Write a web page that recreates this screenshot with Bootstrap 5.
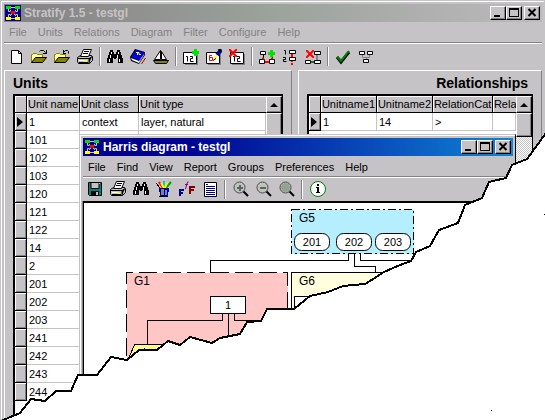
<!DOCTYPE html>
<html lang="en">
<head>
<meta charset="utf-8">
<meta name="viewport" content="width=device-width, initial-scale=1">
<title>Stratify 1.5 - testgl</title>
<link href="https://cdn.jsdelivr.net/npm/bootstrap@5.3.0/dist/css/bootstrap.min.css" rel="stylesheet">
<style>
:root { --face:#c6c3c6; --shade:#848284; }
body { font-family:"Liberation Sans",Arial,sans-serif; font-size:11px; line-height:14px; color:#000; background:var(--face); }
.desk { overflow:hidden; background:var(--face); height:100vh; }
.frame { background:var(--face); border:1px solid var(--face); box-shadow:inset 1px 1px #fff; padding:3px 2px 0 3px; }
.main-win { height:100vh; }
.caption { height:18px; font-size:12px; font-weight:700; color:#fff; padding:0 2px 0 1px; background:linear-gradient(90deg,#00008c,#000494 25%,#1084d6); }
.caption.idle { color:var(--face); background:linear-gradient(90deg,#848284,#9ca29c 50%,#bdbabd); }
.caption .logo { margin-right:3px; }
.cap-btn { width:16px; height:14px; padding:0; border:1px solid; border-color:#fff #000 #000 #fff; box-shadow:inset -1px -1px var(--shade); background:var(--face); color:#000; display:flex; }
.cap-btn svg { display:block; width:14px; height:12px; }
.cap-btn.last { margin-left:2px; }
.menu-bar { gap:11px; padding:3px 5px 0; height:20px; }
.menu-bar a { color:#000; text-decoration:none; }
.idle-menu a { color:#848284; }
.tools { height:28px; border-top:1px solid var(--shade); box-shadow:inset 0 1px #fff; }
.tools button { width:23px; height:22px; border:0; padding:0; background:none; display:flex; align-items:center; justify-content:center; }
.tools svg, .logo { width:16px; height:16px; display:block; overflow:visible; }
.sep { width:7px; height:19px; display:flex; justify-content:center; }
.sep::before { content:""; width:2px; border-left:1px solid var(--shade); border-right:1px solid #fff; }
.panels { gap:6px; }
.pane { border:1px solid; border-color:#fff var(--shade) var(--face) #fff; padding:3px 8px 0; min-width:0; }
.pane-l { flex:290 1 0; }
.pane-r { flex:243 1 0; }
.pane h2 { font-size:14px; line-height:19px; font-weight:700; margin:0 0 1px; }
.pane-r h2 { padding-right:5px; }
.gridbox { border:1px solid #000; border-top:2px solid #000; border-left-width:2px; background:#fff; }
.grid-t { table-layout:fixed; width:100%; border-collapse:separate; border-spacing:0; flex:1 1 0; min-width:0; }
.grid-t th { height:17px; font-weight:400; background:var(--face); border-right:1px solid #000; border-bottom:1px solid #000; box-shadow:inset 1px 1px #fff; padding:0 0 0 1px; white-space:nowrap; overflow:hidden; }
.grid-t th:last-child { border-right:0; }
.grid-t td { height:18px; border-right:1px solid var(--face); border-bottom:1px solid var(--face); padding:0 0 0 2px; white-space:nowrap; overflow:hidden; }
.grid-t td:first-child { background:var(--face); border-color:#000; box-shadow:inset 1px 1px #fff, inset -1px -1px var(--shade); }
.grid-t svg { display:block; width:6px; height:10px; }
.scroller { width:16px; background:repeating-conic-gradient(#fff 0 25%,#c6c3c6 0 50%) 0 0/2px 2px; }
.scroller button { width:16px; height:17px; border:1px solid; border-color:#fff #000 #000 #fff; box-shadow:inset -1px -1px var(--shade); background:var(--face); padding:0; display:flex; align-items:center; justify-content:center; }
.scroller svg { width:8px; height:4px; }
.thumb { border:1px solid; border-color:#fff #000 #000 #fff; box-shadow:inset -1px -1px var(--shade); background:var(--face); height:24px; }
.thumb.long { height:100%; }
.child-win { left:79px; right:29px; top:134px; bottom:0; border-right-color:#000; }
.child-win .menu-bar { height:21px; padding-top:4px; }
.child-win .tools { height:25px; }
.child-win .sep { width:8px; }
.sheet { background:#fff; border:1px solid #000; border-top:2px solid #000; box-shadow:-1px 0 var(--shade); overflow:hidden; }
.sheet svg { display:block; width:430px; height:220px; font-size:12px; }
.tear { pointer-events:none; left:0; top:0; width:100%; height:100%; }
</style>
<script src="https://cdn.jsdelivr.net/npm/bootstrap@5.3.0/dist/js/bootstrap.bundle.min.js"></script>
</head>
<body>
<svg width="0" height="0" class="position-absolute" aria-hidden="true" shape-rendering="crispEdges">
  <defs>
    <symbol id="logo" viewBox="0 0 16 16"><path fill="#00008c" d="M0 0h16v16H0z"/><path stroke="#c6c3c6" fill="none" d="M3.500 4v2.500h2M12.500 4v2.500h-2M3.500 12v-2.500h2M12.500 12v-2.500h-2M6 2.500h4M6 13.500h4M5 5l6 6M11 5l-6 6"/><path fill="#00e300" d="M1 1h5v3H1zM10 1h5v3h-5z"/><path fill="#f00" d="M6 6h4v3H6z"/><path fill="#ff0" d="M1 12h5v3H1zM10 12h5v3h-5z"/></symbol>
    <symbol id="new" viewBox="0 0 16 16"><path fill="#fff" stroke="#000" d="M3.500 1.500h7l3 3v10h-10z"/><path fill="none" stroke="#000" d="M10.500 1.500v3h3"/></symbol>
    <symbol id="folder" viewBox="0 0 16 16"><path fill="#ffff9c" stroke="#848200" d="M.5 13.500v-8h1l1-1h3l1 1h5v3"/><path fill="#848200" stroke="#000" d="M.5 13.500l4-5h11l-4 5z"/></symbol>
    <symbol id="open" viewBox="0 0 16 16"><use href="#folder"/><path fill="none" stroke="#000" d="M8.500 2.500l1-1h3l2 2M15.500 1v4M12 4.500h4"/></symbol>
    <symbol id="reopen" viewBox="0 0 16 16"><use href="#folder"/><path fill="none" stroke="#000" d="M14.500 4.500v-2l-1-1h-2l-2 2M9.500 1v3.500M9 4.500h3"/></symbol>
    <symbol id="print" viewBox="0 0 16 16"><path fill="#c6c3c6" stroke="#000" d="M.5 8.500l3-2h11l1 1v4l-3 3h-11l-1-2z"/><path fill="#fff" stroke="#000" d="M3.500 7.500l3-7h8l-3 7z"/><path stroke="#000" d="M7 2.500h5M6 4.500h5M1 9.500h11M12 14.500V9.500l3-2"/><path stroke="#fff" d="M2 11.500h7"/><path stroke="#ff0" stroke-width="2" d="M7 12h3"/><path stroke="#000" d="M2 13.500h9"/></symbol>
    <symbol id="binoc" viewBox="0 0 16 16"><path d="M3 1h3v2h1v2h2V3h1V1h3v2h1v3h1v3h1v5h-5V9H9v1H7V9H6v5H0V9h1V6h1V3h1z"/><path fill="#fff" d="M4 3h1v2H4zM11 3h1v2h-1zM3 6h1v3H3zM10 6h1v3h-1zM2 10h1v3H2zM12 10h1v3h-1z"/></symbol>
    <symbol id="book" viewBox="0 0 16 16"><path fill="#000" d="M0 8L5 0l10 3v3L9 15 1 12z"/><path fill="#fff" d="M1 9l8 3 5-7v1L9 14l-7-3z"/><path fill="#00f" d="M1 8l5-7 9 3-6 7z"/><path stroke="#ff0" fill="none" d="M6 3.500h3v2h2M7.500 6V4"/><path stroke="#848284" d="M9 12.500l5-7"/><path stroke="#a00" d="M11.500 15l4-6"/></symbol>
    <symbol id="boat" viewBox="0 0 16 16"><path fill="#fff" stroke="#000" d="M7.500 10.500v-9l-6 9zM8.500 10.500v-8l5 8z"/><path fill="#848200" stroke="#000" d="M.5 11.500h15l-2 3h-11z"/></symbol>
    <symbol id="card" viewBox="0 0 16 16"><path fill="#848284" d="M2 5h13v11H2z"/><path fill="#fff" stroke="#000" d="M.5 3.500h13v11H.5z"/></symbol>
    <symbol id="twelve" viewBox="0 0 16 16"><use href="#card"/><path fill="none" stroke="#000" d="M3 7.500h1.500v5M7 7.500h2.500v2h-2v3h3"/></symbol>
    <symbol id="plus" viewBox="0 0 7 7"><path fill="#00e300" d="M2 0h3v2h2v3H5v2H2V5H0V2h2z"/></symbol>
    <symbol id="cross" viewBox="0 0 8 8"><path stroke="#f00" stroke-width="2" d="M0 0l8 8M8 0L0 8"/></symbol>
    <symbol id="cardadd" viewBox="0 0 16 16"><use href="#twelve"/><use href="#plus" x="9" y="0" width="7" height="7"/></symbol>
    <symbol id="cardpen" viewBox="0 0 16 16"><use href="#card"/><path fill="none" stroke="#f00" d="M6 6.500H3.500v5h3v-3h-3"/><path stroke="#00008c" stroke-width="4" d="M11 6l4-5"/><path stroke="#ffff00" stroke-width="2" d="M8 10l3-4"/><path stroke="#000" d="M7 11.500l3-2M12 1l3-1v3"/></symbol>
    <symbol id="carddel" viewBox="0 0 16 16"><g transform="translate(1 0)"><use href="#twelve" width="16" height="16"/></g><use href="#cross" x="0" y="0" width="8" height="8"/></symbol>
    <symbol id="reladd" viewBox="0 0 16 16"><path stroke="#000" fill="none" d="M4.500 6v4M13.500 6v4"/><path fill="#fff" stroke="#000" d="M1.500 2.500h5v3h-5zM.5 10.500h5v4h-5zM10.500 10.500h5v4h-5z"/><path stroke="#f00" stroke-width="2" d="M6 13h4M4 8.500v2M13 8.500v2"/><use href="#plus" x="9" y="1" width="7" height="7"/></symbol>
    <symbol id="relnum" viewBox="0 0 16 16"><path stroke="#000" fill="none" d="M2 1.500h1.500v4M1 8.500h2.500v2h-2v2h3"/><path fill="#fff" stroke="#000" d="M7.500 1.500h6v3h-6zM7.500 8.500h6v3h-6z"/><path stroke="#f00" stroke-width="2" d="M10 5v3M10 12v1M10 14v2"/></symbol>
    <symbol id="reldel" viewBox="0 0 16 16"><path stroke="#848284" stroke-width="2" d="M12 6v5"/><path fill="#fff" stroke="#000" d="M9.500 2.500h6v3h-6zM.5 11.500h5v3h-5zM9.500 11.500h6v3h-6z"/><path stroke="#008200" stroke-width="2" d="M6 13h3"/><use href="#cross" x="1" y="1" width="8" height="8"/></symbol>
    <symbol id="check" viewBox="0 0 16 16"><path fill="none" stroke="#000" stroke-width="3" d="M2 8l4 5 8-10"/><path fill="none" stroke="#008200" stroke-width="2" d="M2 8l4 4 8-10"/></symbol>
    <symbol id="tree" viewBox="0 0 16 16"><path fill="none" stroke="#848284" d="M4.500 6v2.500h7V6M8.500 8v3"/><path fill="#fff" stroke="#000" d="M1.500 2.500h5v3h-5zM9.500 2.500h5v3h-5zM5.500 10.500h5v3h-5z"/></symbol>
    <symbol id="save" viewBox="0 0 16 16"><path fill="#008284" stroke="#000" d="M1.500 1.500h13v13h-12l-1-1z"/><path fill="#c6c3c6" stroke="#000" d="M4 1.500h8v6H4z"/><path fill="#000" d="M4 10h8v4H4z"/><path fill="#c6c3c6" d="M9 11h2v3H9zM12 2h1v1h-1z"/></symbol>
    <symbol id="pens" viewBox="0 0 16 16"><path stroke="#f00" stroke-width="2" d="M3 1l4 6"/><path stroke="#0cc" stroke-width="2" d="M8 0v7"/><path stroke="#00a200" stroke-width="2" d="M15 1L9 8"/><path stroke="#ff0" stroke-width="2" d="M5 2l3 5M11 2L9 7"/><path stroke="#000" d="M1 4l3 3M0 2l3 3"/><path fill="#00008c" d="M3 7h10v4h-1v4H4v-4H3z"/><path fill="#848284" d="M5 8h3v6H5z"/><path fill="#5a82ff" d="M9 9h2v5H9z"/><path stroke="#000" d="M3 15.500h9"/></symbol>
    <symbol id="fonts" viewBox="0 0 16 16"><path fill="none" stroke="#00008c" stroke-width="2" d="M1 15V9M0 9h5M1 12h3"/><path fill="none" stroke="#840084" d="M9.500 1H8.500L6.500 8M6 3.500h3"/><path fill="none" stroke="#840000" stroke-width="2" d="M11 13V6M10 6h6M11 9h4"/></symbol>
    <symbol id="report" viewBox="0 0 16 16"><path fill="#fff" stroke="#000" d="M2.500 1.500h12v14h-12z"/><path stroke="#00008c" d="M4 3.500h2M4 5.500h9M4 7.500h9M4 9.500h9M4 11.500h9M4 13.500h9"/></symbol>
    <symbol id="lens" viewBox="0 0 16 16"><path stroke="#000" stroke-width="2" d="M10 10l5 5"/><circle cx="6.500" cy="6.500" r="5.500" fill="#bdc3bd" stroke="#4a4a4a" shape-rendering="auto"/></symbol>
    <symbol id="zin" viewBox="0 0 16 16"><use href="#lens"/><path stroke="#636163" stroke-width="2" d="M4 7h6M7 4v6"/></symbol>
    <symbol id="zout" viewBox="0 0 16 16"><use href="#lens"/><path stroke="#636163" stroke-width="2" d="M4 7h6"/></symbol>
    <symbol id="zfit" viewBox="0 0 16 16"><use href="#lens"/><circle cx="6.500" cy="6.500" r="4.500" fill="#94a294"/></symbol>
    <symbol id="info" viewBox="0 0 16 16"><circle cx="8" cy="8" r="7.500" fill="#fff" stroke="#008200" shape-rendering="auto"/><path d="M7 3h2v2H7zM6 6h3v5h1v1H6v-1h1V7H6z"/></symbol>
    <symbol id="min" viewBox="0 0 14 12"><path d="M3 8h6v2H3z"/></symbol>
    <symbol id="max" viewBox="0 0 14 12"><path d="M2 1h10v9H2zM3 3v6h8V3z" fill-rule="evenodd"/></symbol>
    <symbol id="close" viewBox="0 0 14 12"><path stroke="#000" stroke-width="2" d="M3.500 2l7 7M10.500 2l-7 7"/></symbol>
  </defs>
</svg>

<div class="desk position-relative">
  <main class="main-win frame d-flex flex-column">
    <header class="caption idle d-flex align-items-center">
      <svg class="logo"><use href="#logo"/></svg><span class="me-auto">Stratify 1.5 - testgl</span>
      <button class="cap-btn" aria-label="Minimize"><svg><use href="#min"/></svg></button>
      <button class="cap-btn" aria-label="Maximize"><svg><use href="#max"/></svg></button>
      <button class="cap-btn last" aria-label="Close"><svg><use href="#close"/></svg></button>
    </header>
    <nav class="menu-bar idle-menu d-flex" aria-label="Main menu">
      <a href="#">File</a><a href="#">Units</a><a href="#">Relations</a><a href="#">Diagram</a><a href="#">Filter</a><a href="#">Configure</a><a href="#">Help</a>
    </nav>
    <div class="tools d-flex align-items-center flex-shrink-0" role="toolbar" aria-label="Main tools">
      <button aria-label="New"><svg><use href="#new"/></svg></button>
      <button aria-label="Open"><svg><use href="#open"/></svg></button>
      <button aria-label="Reopen"><svg><use href="#reopen"/></svg></button>
      <button aria-label="Print"><svg><use href="#print"/></svg></button>
      <span class="sep"></span>
      <button aria-label="Find"><svg><use href="#binoc"/></svg></button>
      <button aria-label="Book"><svg><use href="#book"/></svg></button>
      <button aria-label="Boat"><svg><use href="#boat"/></svg></button>
      <span class="sep"></span>
      <button aria-label="Add unit"><svg><use href="#cardadd"/></svg></button>
      <button aria-label="Edit unit"><svg><use href="#cardpen"/></svg></button>
      <button aria-label="Delete unit"><svg><use href="#carddel"/></svg></button>
      <span class="sep"></span>
      <button aria-label="Add relation"><svg><use href="#reladd"/></svg></button>
      <button aria-label="Number relations"><svg><use href="#relnum"/></svg></button>
      <button aria-label="Delete relation"><svg><use href="#reldel"/></svg></button>
      <span class="sep"></span>
      <button aria-label="Check"><svg><use href="#check"/></svg></button>
      <button aria-label="Diagram"><svg><use href="#tree"/></svg></button>
    </div>
    <div class="panels d-flex flex-grow-1">
      <section class="pane pane-l d-flex flex-column">
        <h2>Units</h2>
        <div class="gridbox d-flex flex-grow-1 align-items-start">
          <table class="grid-t">
            <colgroup><col style="width:12px"><col style="width:53px"><col style="width:59px"><col></colgroup>
            <thead><tr><th></th><th>Unit name</th><th>Unit class</th><th>Unit type</th></tr></thead>
            <tbody>
              <tr><td><svg viewBox="0 0 6 10"><path d="M0 0l6 5-6 5z"/></svg></td><td>1</td><td>context</td><td>layer, natural</td></tr>
              <tr><td></td><td>101</td><td></td><td></td></tr>
              <tr><td></td><td>102</td><td></td><td></td></tr>
              <tr><td></td><td>103</td><td></td><td></td></tr>
              <tr><td></td><td>120</td><td></td><td></td></tr>
              <tr><td></td><td>121</td><td></td><td></td></tr>
              <tr><td></td><td>122</td><td></td><td></td></tr>
              <tr><td></td><td>14</td><td></td><td></td></tr>
              <tr><td></td><td>2</td><td></td><td></td></tr>
              <tr><td></td><td>201</td><td></td><td></td></tr>
              <tr><td></td><td>202</td><td></td><td></td></tr>
              <tr><td></td><td>203</td><td></td><td></td></tr>
              <tr><td></td><td>241</td><td></td><td></td></tr>
              <tr><td></td><td>242</td><td></td><td></td></tr>
              <tr><td></td><td>243</td><td></td><td></td></tr>
              <tr><td></td><td>244</td><td></td><td></td></tr>
            </tbody>
          </table>
          <div class="scroller align-self-stretch"><button aria-label="Scroll up"><svg viewBox="0 0 8 4"><path d="M4 0l4 4H0z"/></svg></button><div class="thumb long"></div></div>
        </div>
      </section>
      <section class="pane pane-r d-flex flex-column">
        <h2 class="text-end">Relationships</h2>
        <div class="gridbox d-flex flex-grow-1 align-items-start">
          <table class="grid-t">
            <colgroup><col style="width:12px"><col style="width:56px"><col style="width:56px"><col style="width:60px"><col></colgroup>
            <thead><tr><th></th><th>Unitname1</th><th>Unitname2</th><th>RelationCat</th><th>Rela</th></tr></thead>
            <tbody><tr><td><svg viewBox="0 0 6 10"><path d="M0 0l6 5-6 5z"/></svg></td><td>1</td><td>14</td><td>&gt;</td><td></td></tr></tbody>
          </table>
          <div class="scroller align-self-stretch"><button aria-label="Scroll up"><svg viewBox="0 0 8 4"><path d="M4 0l4 4H0z"/></svg></button><div class="thumb"></div></div>
        </div>
      </section>
    </div>
  </main>

  <section class="child-win frame position-absolute d-flex flex-column">
    <header class="caption d-flex align-items-center">
      <svg class="logo"><use href="#logo"/></svg><span class="me-auto">Harris diagram - testgl</span>
      <button class="cap-btn" aria-label="Minimize"><svg><use href="#min"/></svg></button>
      <button class="cap-btn" aria-label="Maximize"><svg><use href="#max"/></svg></button>
      <button class="cap-btn last" aria-label="Close"><svg><use href="#close"/></svg></button>
    </header>
    <nav class="menu-bar d-flex" aria-label="Diagram menu">
      <a href="#">File</a><a href="#">Find</a><a href="#">View</a><a href="#">Report</a><a href="#">Groups</a><a href="#">Preferences</a><a href="#">Help</a>
    </nav>
    <div class="tools d-flex align-items-center flex-shrink-0" role="toolbar" aria-label="Diagram tools">
      <button aria-label="Save"><svg><use href="#save"/></svg></button>
      <button aria-label="Print"><svg><use href="#print"/></svg></button>
      <button aria-label="Find"><svg><use href="#binoc"/></svg></button>
      <button aria-label="Colours"><svg><use href="#pens"/></svg></button>
      <button aria-label="Fonts"><svg><use href="#fonts"/></svg></button>
      <button aria-label="Report"><svg><use href="#report"/></svg></button>
      <span class="sep"></span>
      <button aria-label="Zoom in"><svg><use href="#zin"/></svg></button>
      <button aria-label="Zoom out"><svg><use href="#zout"/></svg></button>
      <button aria-label="Zoom to fit"><svg><use href="#zfit"/></svg></button>
      <span class="sep"></span>
      <button aria-label="Info"><svg><use href="#info"/></svg></button>
    </div>
    <div class="sheet flex-grow-1">
      <svg viewBox="84 203 430 220" role="img" aria-label="Harris diagram">
        <g stroke="#000" fill="none" shape-rendering="crispEdges">
          <path fill="#b5efff" stroke-dasharray="8 3 2 3" d="M291.500 209.500h122v44h-122z"/>
          <path fill="#ffc6c6" stroke-dasharray="18 6" d="M126.500 380V272.500h161V380"/>
          <path fill="#ffffde" d="M291.500 380V272.500H400V380"/>
          <path fill="#fff" d="M294.500 330v-33.500h60V330z"/>
          <path d="M348.500 253v7.500h-138v12M354.500 253v13.500h21v6M360.500 253v7.500h55"/>
          <path fill="#ffff84" d="M128.500 359l6-14.500h34v20z"/>
          <path d="M222.500 313v7.500h-75v24M228.500 313v30M234.500 313v7.500h30"/>
          <path d="M144.500 348v3M151.500 349v2M139.500 350h18"/>
          <path fill="#fff" d="M210.500 296.500h35v17h-35z"/>
        </g>
        <g fill="#fff" stroke="#000">
          <rect x="294.500" y="233.500" width="35" height="17" rx="7"/>
          <rect x="336.500" y="233.500" width="35" height="17" rx="7"/>
          <rect x="375.500" y="233.500" width="35" height="17" rx="7"/>
        </g>
        <text x="299" y="222">G5</text><text x="134" y="285">G1</text><text x="299" y="285">G6</text>
        <g text-anchor="middle" font-size="11">
          <text x="312" y="246">201</text><text x="354" y="246">202</text><text x="393" y="246">203</text><text x="228" y="309">1</text>
        </g>
      </svg>
    </div>
  </section>

  <svg class="tear position-absolute" viewBox="0 0 545 420" preserveAspectRatio="none" aria-hidden="true" shape-rendering="crispEdges">
    <defs><path id="edge" d="M546 133L527 159 512 165 506 178 489 182 482 198 465 205 458 223 439 230 430 246 416 252 411 261 400 265 384 272 370 281 365 284 343 286 328 292 310 296 294 309 267 309 261 321 247 322 240 334 220 338 212 343 190 337 180 345 168 341 157 350 139 350 127 360 111 357 97 375 78 375 71 391 56 391 45 401 31 399 20 413 1 421"/></defs>
    <path fill="#fff" d="M546 133L527 159 512 165 506 178 489 182 482 198 465 205 458 223 439 230 430 246 416 252 411 261 400 265 384 272 370 281 365 284 343 286 328 292 310 296 294 309 267 309 261 321 247 322 240 334 220 338 212 343 190 337 180 345 168 341 157 350 139 350 127 360 111 357 97 375 78 375 71 391 56 391 45 401 31 399 20 413 1 421H546z"/>
    <use href="#edge" fill="none" stroke="#000" stroke-width="2"/>
    <path d="M544 214h1v1h-1zM491 410h1v1h-1z"/>
  </svg>
</div>
</body>
</html>
